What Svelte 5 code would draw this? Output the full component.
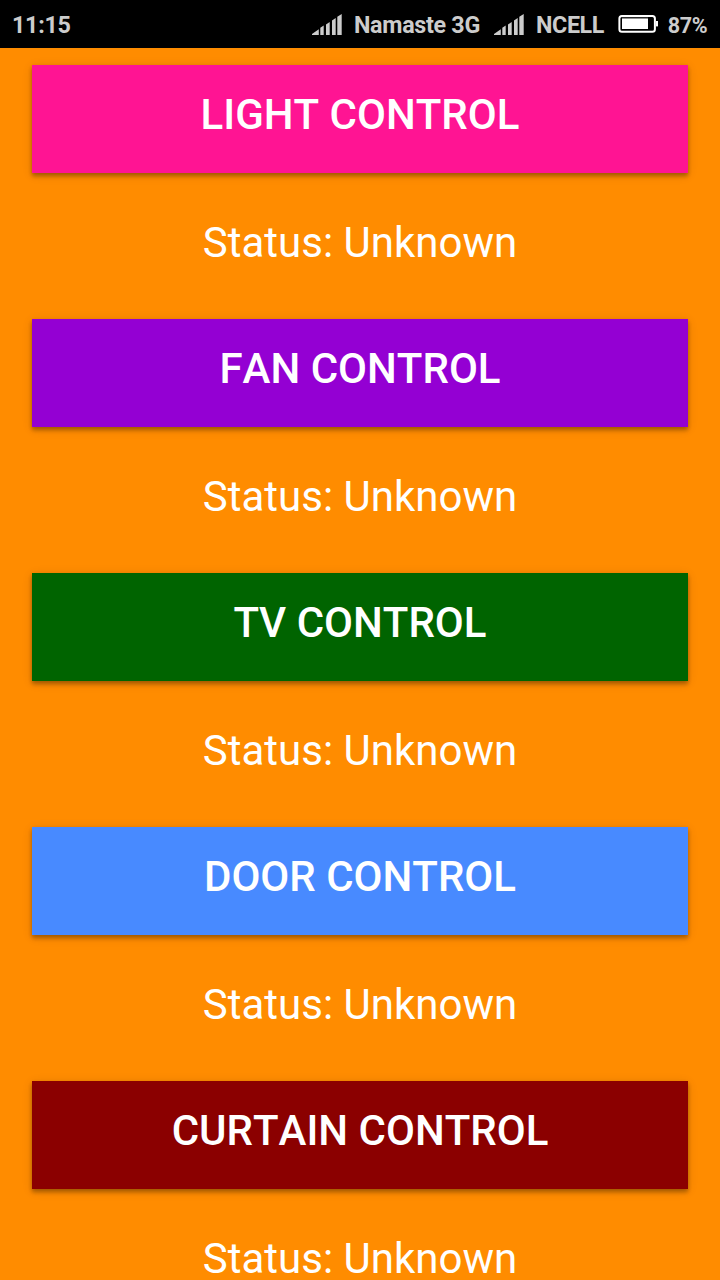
<script>
  const controls = [
    { name: 'LIGHT CONTROL', color: '#ff1493' },
    { name: 'FAN CONTROL', color: '#9400d3' },
    { name: 'TV CONTROL', color: '#006400' },
    { name: 'DOOR CONTROL', color: '#488aff' },
    { name: 'CURTAIN CONTROL', color: '#8b0000' }
  ];
</script>

{#snippet signal()}
  <svg class="signal" width="30" height="22" viewBox="0 0 30 22" fill="#ccc">
    <path d="M0 21 L6.8 16.3 V22 H0Z M8.3 14.8 L11.7 12.6 V22 H8.3Z M14 11.5 L17.7 8.9 V22 H14Z M20 7.5 L23.7 5.1 V22 H20Z M25.3 3.7 L29.7 .9 V22 H25.3Z" />
  </svg>
{/snippet}

<div class="screen">
  <header>
    <span class="time">11:15</span>
    {@render signal()}
    <span class="carrier">Namaste 3G</span>
    {@render signal()}
    <span class="carrier second">NCELL</span>
    <svg class="battery" width="40" height="18" viewBox="0 0 40 18"><rect x="1.4" y="1" width="35.5" height="15.8" rx="2.5" fill="none" stroke="#fff" stroke-width="2" /><rect x="4" y="2.2" width="26" height="1.4" fill="#333" /><rect x="4" y="3.5" width="26" height="10.5" fill="#fff" /><rect x="38" y="6" width="2" height="5.4" fill="#fff" /></svg>
    <span class="percent">87%</span>
  </header>
  <main>
    {#each controls as control}
      <section>
        <button style:background={control.color}>{control.name}</button>
        <p>Status: Unknown</p>
      </section>
    {/each}
  </main>
</div>

<style>
  :global(body) { margin: 0; overflow: hidden; }
  .screen { width: 720px; height: 1280px; overflow: hidden; background: #ff8c00; font-family: Roboto, sans-serif; }
  header { height: 48px; box-sizing: border-box; display: flex; align-items: center; padding: 2px 0 0 12px; background: #000; color: #ccc; font-size: 23.3px; font-weight: 700; letter-spacing: -.3px; white-space: nowrap; }
  .time { margin-right: auto; }
  .carrier { width: 152px; box-sizing: border-box; padding-right: 2px; text-align: center; }
  .second { width: 94px; letter-spacing: -.4px; }
  .percent { width: 62px; box-sizing: border-box; padding-right: 3px; text-align: center; font-size: 21.5px; letter-spacing: -.3px; }
  svg { flex: none; }
  .signal { margin-top: -2px; }
  .battery { margin-top: -3px; }
  main { padding: 17px 32px 0; }
  section { height: 254px; }
  button { display: block; width: 100%; height: 108px; margin: 0; padding: 0 0 9px; border: 0; border-radius: 0; box-shadow: 0 4px 4px rgba(0,0,0,.14), 0 2px 4px rgba(0,0,0,.2), 0 2px 10px rgba(0,0,0,.12); color: #fff; font: 500 42px/50px Roboto, sans-serif; font-kerning: none; }
  p { margin: 45px 0 0; color: #fff; font-size: 42px; line-height: 50px; text-align: center; }
</style>
